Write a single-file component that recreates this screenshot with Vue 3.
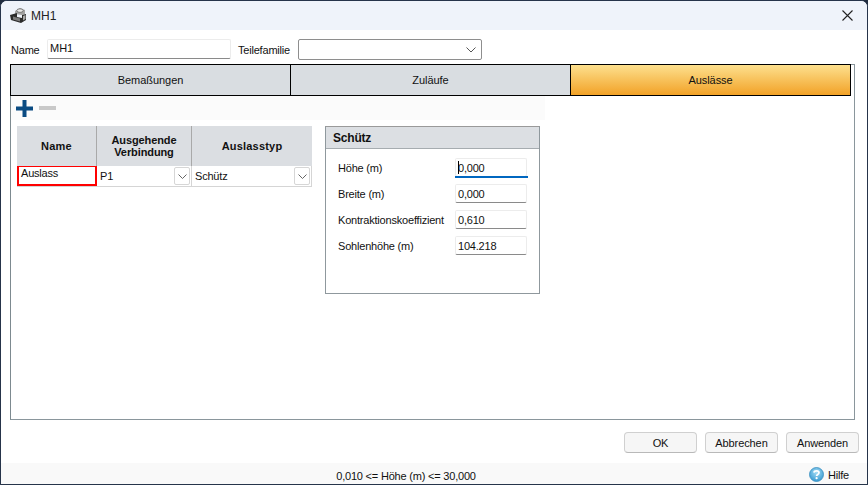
<script setup>
const tabs = [
  { label: 'Bemaßungen', active: false },
  { label: 'Zuläufe', active: false },
  { label: 'Auslässe', active: true },
]
const fields = [
  { label: 'Höhe (m)', value: '0,000', focus: true },
  { label: 'Breite (m)', value: '0,000', focus: false },
  { label: 'Kontraktionskoeffizient', value: '0,610', focus: false },
  { label: 'Sohlenhöhe (m)', value: '104.218', focus: false },
]
</script>

<template>
  <div class="window">
    <header class="titlebar">
      <svg class="app-icon" width="18" height="17" viewBox="0 0 18 17">
        <path d="M6 4 L11 1 L16 3 L16 7 L13 8 L6 7 Z" fill="#a3a3a3" />
        <ellipse cx="11" cy="3.6" rx="3.2" ry="1.8" fill="#e8e8e8" stroke="#555" stroke-width=".7" />
        <path d="M1 8 L8 6 L8 10 L13 11 L13 8 L17 7 L17 13 L12 16 L2 13 Z" fill="#2b2b2b" />
        <path d="M4 9.5 L11 11.5 L11 14.5 L4 12.5 Z" fill="#7c7c7c" />
        <path d="M14 9 L16.5 8 L16.5 12 L14 13.5 Z" fill="#a8a8a8" />
      </svg>
      <span class="title">MH1</span>
      <svg class="close" width="11" height="11" viewBox="0 0 11 11">
        <path d="M.5 .5 L10.5 10.5 M10.5 .5 L.5 10.5" stroke="#222" stroke-width="1.1" fill="none" />
      </svg>
    </header>

    <main class="content">
      <div class="name-row">
        <label class="name-label">Name</label>
        <div class="line-input name-input">MH1</div>
        <label class="family-label">Teilefamilie</label>
        <div class="family-select">
          <svg width="10" height="6" viewBox="0 0 10 6"><path d="M.5 .5 L5 5 L9.5 .5" stroke="#555" fill="none" /></svg>
        </div>
      </div>

      <section class="panel">
        <div class="tabs">
          <div v-for="t in tabs" :key="t.label" class="tab" :class="{ active: t.active }">{{ t.label }}</div>
        </div>

        <div class="toolbar">
          <svg width="17" height="17" viewBox="0 0 17 17">
            <path d="M6.5 0 H10.5 V6.5 H17 V10.5 H10.5 V17 H6.5 V10.5 H0 V6.5 H6.5 Z" fill="#0a4b82" />
          </svg>
          <div class="minus"></div>
        </div>

        <div class="editor">
          <div class="grid">
            <div class="head spaced">Name</div>
            <div class="head">Ausgehende<br />Verbindung</div>
            <div class="head spaced">Auslasstyp</div>
            <div class="cell name-cell">Auslass</div>
            <div class="cell combo">
              <span>P1</span>
              <span class="drop"><svg width="9" height="5" viewBox="0 0 9 5"><path d="M.5 .5 L4.5 4.5 L8.5 .5" stroke="#666" fill="none" /></svg></span>
            </div>
            <div class="cell combo">
              <span>Schütz</span>
              <span class="drop"><svg width="9" height="5" viewBox="0 0 9 5"><path d="M.5 .5 L4.5 4.5 L8.5 .5" stroke="#666" fill="none" /></svg></span>
            </div>
          </div>

          <div class="gate">
            <div class="gate-head">Schütz</div>
            <div class="gate-body">
              <div v-for="f in fields" :key="f.label" class="field">
                <span class="field-label">{{ f.label }}</span>
                <div class="field-input" :class="{ focus: f.focus }">
                  <i v-if="f.focus" class="caret"></i>{{ f.value }}
                </div>
              </div>
            </div>
          </div>
        </div>
      </section>

      <div class="actions">
        <button class="btn">OK</button>
        <button class="btn">Abbrechen</button>
        <button class="btn">Anwenden</button>
      </div>
    </main>

    <footer class="status">
      <span class="status-text">0,010 &lt;= Höhe (m) &lt;= 30,000</span>
      <span class="help">
        <svg width="15" height="15" viewBox="0 0 15 15">
          <defs>
            <radialGradient id="hg" cx="50%" cy="35%" r="70%">
              <stop offset="0" stop-color="#a5dcf5" />
              <stop offset="1" stop-color="#2f95cf" />
            </radialGradient>
          </defs>
          <circle cx="7.5" cy="7.5" r="7" fill="url(#hg)" stroke="#3b8fc0" stroke-width=".8" />
          <path d="M5 5.6 C5.2 3.4 10 3.3 10 5.8 C10 7.6 7.6 7.4 7.6 9" stroke="#fff" stroke-width="1.7" fill="none" />
          <circle cx="7.6" cy="11.2" r="1.1" fill="#fff" />
        </svg>
        Hilfe
      </span>
    </footer>
  </div>
</template>

<style>
html, body { margin: 0; background: #202c3e; }
</style>

<style scoped>
.window {
  width: 868px;
  height: 485px;
  box-sizing: border-box;
  display: flex;
  flex-direction: column;
  background: #fff;
  border: 1px solid #26344a;
  border-radius: 7px 7px 0 0;
  overflow: hidden;
  font-family: "Liberation Sans", Arial, sans-serif;
  font-size: 11px;
  letter-spacing: -0.2px;
  color: #111;
}
.titlebar {
  height: 29px;
  flex: none;
  display: flex;
  align-items: center;
  background: #eff3fa;
  padding: 0 11px 0 8px;
  letter-spacing: 0;
}
.app-icon { margin-right: 4px; }
.title { font-size: 12px; color: #222; }
.close { margin-left: auto; margin-right: 3px; }

.content {
  flex: 1;
  display: flex;
  flex-direction: column;
  padding: 0 7px 0 9px;
  min-height: 0;
}
.name-row {
  height: 34px;
  flex: none;
  display: flex;
  align-items: center;
  padding-top: 4px;
  box-sizing: border-box;
}
.name-label { margin-left: 1px; width: 36px; padding-top: 2px; }
.line-input {
  width: 184px;
  height: 20px;
  box-sizing: border-box;
  border: 1px solid #ececec;
  border-bottom-color: #8a8a8a;
  border-radius: 2px;
  padding: 2px 2px;
  font-size: 11px;
  letter-spacing: 0;
}
.family-label { margin-left: 7px; width: 60px; padding-top: 2px; }
.family-select {
  width: 184px;
  height: 21px;
  box-sizing: border-box;
  border: 1px solid #8e8e8e;
  border-radius: 2px;
  display: flex;
  align-items: center;
  justify-content: flex-end;
  padding: 2px 5px 0 0;
}

.panel {
  width: 845px;
  height: 356px;
  flex: none;
  box-sizing: border-box;
  border: 1px solid #8a969c;
  border-left-color: #7d8a90;
}
.tabs {
  display: flex;
  height: 32px;
  width: 841px;
  margin: -1px 0 0 -1px;
  box-sizing: border-box;
  border: 1px solid #000;
}
.tab {
  flex: 1;
  display: flex;
  align-items: center;
  justify-content: center;
  background: #d9dde1;
  border-right: 1px solid #000;
  font-size: 11px;
  letter-spacing: -0.05px;
}
.tab:last-child { border-right: 0; }
.tab.active { background: linear-gradient(#fde08e, #f2a227); }

.toolbar {
  width: 534px;
  height: 24px;
  display: flex;
  align-items: center;
  gap: 6px;
  padding-left: 5px;
  box-sizing: border-box;
  background: #fbfbfb;
}
.minus { width: 17px; height: 4px; background: #c9c9c9; }

.editor {
  display: flex;
  align-items: flex-start;
  padding: 6px 0 0 6px;
}
.grid {
  width: 295px;
  display: grid;
  grid-template-columns: 80px 95px 120px;
  grid-template-rows: 40px 20px;
  background: #d0d0d0;
  border-bottom: 1px solid #d5d5d5;
}
.head {
  background: #dbdee2;
  border-right: 1px solid #a9a9a9;
  display: flex;
  align-items: center;
  justify-content: center;
  text-align: center;
  font-weight: 700;
  line-height: 12px;
  letter-spacing: -0.1px;
  color: #111;
}
.head.spaced { letter-spacing: 0.2px; }
.head:nth-child(3) { border-right: 0; }
.cell {
  background: #fff;
  box-sizing: border-box;
  display: flex;
  align-items: center;
  padding-left: 3px;
}
.name-cell {
  border: 2px solid #f00;
  border-top-width: 1px;
  align-items: flex-start;
  padding-left: 2px;
}
.combo { justify-content: space-between; padding-right: 1px; border-right: 1px solid #d5d5d5; }
.drop {
  width: 16px;
  height: 18px;
  box-sizing: border-box;
  border: 1px solid #d6d6d6;
  border-radius: 2px;
  display: flex;
  align-items: center;
  justify-content: center;
}

.gate {
  width: 215px;
  height: 168px;
  box-sizing: border-box;
  margin-left: 13px;
  border: 1px solid #8f989d;
  border-top-color: #9a9a9a;
}
.gate-head {
  height: 22px;
  background: #dcdfe3;
  border-bottom: 1px solid #a6acb0;
  box-sizing: border-box;
  padding: 4px 0 0 7px;
  font-weight: 700;
  font-size: 12px;
}
.gate-body {
  display: flex;
  flex-direction: column;
  gap: 7px;
  padding: 9px 12px 0 12px;
}
.field {
  display: flex;
  align-items: center;
  justify-content: space-between;
  height: 19px;
}
.field-input {
  width: 72px;
  height: 19px;
  box-sizing: border-box;
  border: 1px solid #ececec;
  border-bottom-color: #8a8a8a;
  border-radius: 2px;
  padding: 3px 2px 0;
  position: relative;
}
.field-input.focus::after {
  content: "";
  position: absolute;
  left: -1px;
  right: -2px;
  bottom: -2px;
  height: 2px;
  background: #0067c0;
}
.caret {
  position: absolute;
  left: 2px;
  top: 2px;
  width: 1px;
  height: 13px;
  background: #000;
}

.actions {
  display: flex;
  justify-content: flex-end;
  gap: 8px;
  padding: 12px 1px 0 0;
}
.btn {
  width: 73px;
  height: 21px;
  box-sizing: border-box;
  border: 1px solid #d0d0d0;
  border-bottom-color: #b9b9b9;
  border-radius: 4px;
  background: #f6f6f6;
  font: inherit;
  letter-spacing: -0.1px;
  color: #111;
  padding: 0;
}

.status {
  margin-top: auto;
  height: 21px;
  flex: none;
  display: flex;
  align-items: center;
  justify-content: center;
  position: relative;
  background: #f9f9f9;
}
.status-text { padding-top: 5px; margin-right: 56px; }
.help {
  position: absolute;
  right: 18px;
  top: 4px;
  display: flex;
  align-items: center;
  gap: 4px;
}
</style>
